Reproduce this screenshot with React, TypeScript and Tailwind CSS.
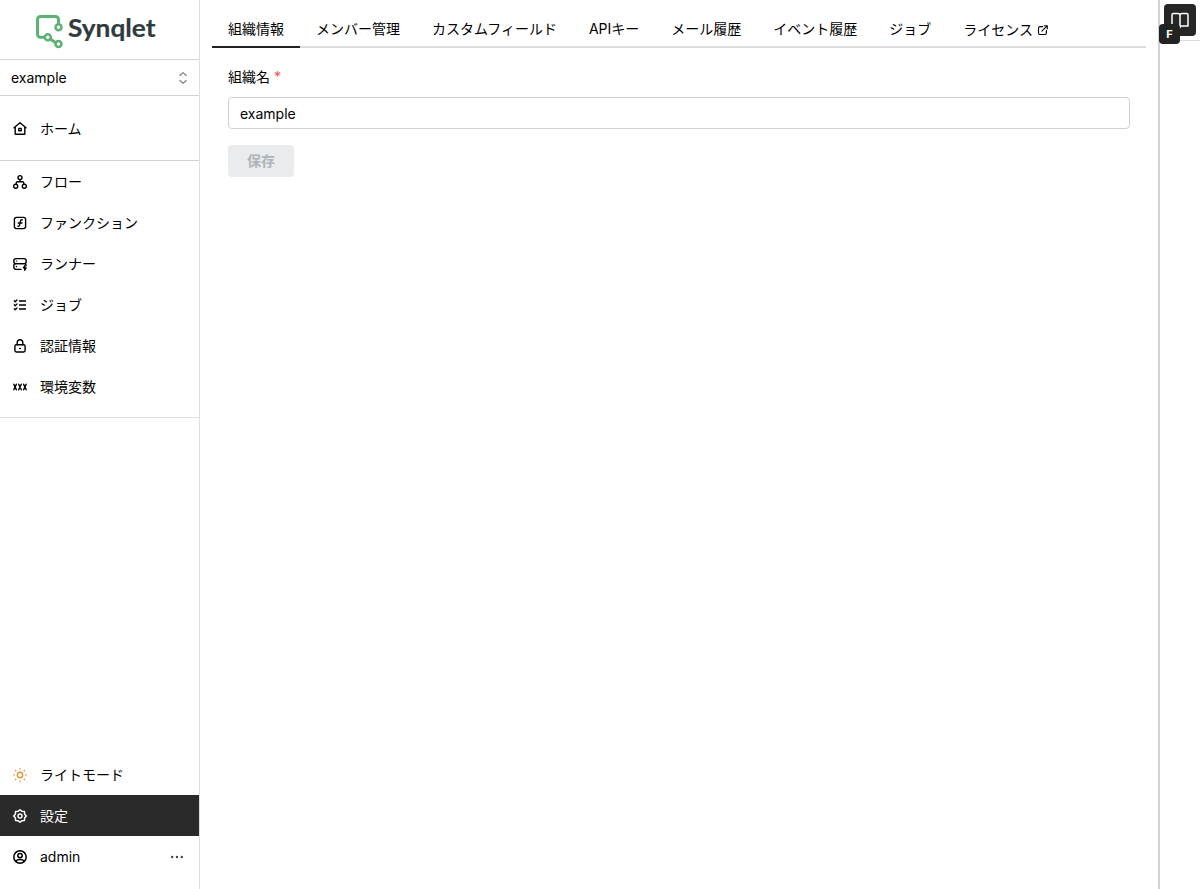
import type { ReactNode } from 'react'

type IconProps = { children: ReactNode; className?: string; strokeWidth?: number }

function Icon({ children, className = '', strokeWidth = 1.4 }: IconProps) {
  return (
    <svg
      viewBox="0 0 16 16"
      className={`size-4 shrink-0 ${className}`}
      fill="none"
      stroke="currentColor"
      strokeWidth={strokeWidth}
      strokeLinecap="round"
      strokeLinejoin="round"
    >
      {children}
    </svg>
  )
}

const HomeIcon = () => (
  <Icon>
    <path d="M2 6.8 8 1.8l6 5M3.2 6v7.2h9.6V6" />
    <rect x="6.8" y="7.4" width="2.4" height="2.4" />
  </Icon>
)

const FlowIcon = () => (
  <Icon>
    <circle cx="8" cy="3.6" r="2" />
    <circle cx="3.7" cy="12.2" r="2" />
    <circle cx="12.3" cy="12.2" r="2" />
    <path d="M8 5.8v2M4.2 10V9.2Q4.2 7.8 5.6 7.8h4.8q1.4 0 1.4 1.4v.8" />
  </Icon>
)

const FunctionIcon = () => (
  <Icon>
    <rect x="2.4" y="2.4" width="11.2" height="11.2" rx="2" />
    <path d="M6 11.2c.9.2 1.3-.2 1.5-1L8.6 5.7c.2-.8.7-1.1 1.6-.9M6.2 8h3.8" />
  </Icon>
)

const RunnerIcon = () => (
  <Icon>
    <rect x="1.8" y="2.6" width="12.4" height="5" rx="2.2" />
    <path d="M9 13.4H4a2.2 2.2 0 0 1-2.2-2.2V9.8A2.2 2.2 0 0 1 4 7.6h8a2.2 2.2 0 0 1 2.2 2M4.4 5.1h.1M4.4 10.5h.1" />
    <path d="m12.9 9.6-1.5 2.3h2.7l-1.4 2.3z" fill="currentColor" />
  </Icon>
)

const JobIcon = () => (
  <Icon>
    <path d="M7 4h7M7 8h7M7 12h7" strokeLinecap="butt" strokeWidth="1.3" />
    <path d="m2.3 3.8.9.9L5 3M2.3 7.8l.9.9L5 7M2.3 11.8l.9.9L5 11" strokeWidth="1.3" />
  </Icon>
)

const LockIcon = () => (
  <Icon>
    <rect x="2.9" y="6.8" width="10.2" height="7.2" rx="1.4" />
    <path d="M5.2 6.8V4.6a2.8 2.8 0 0 1 5.6 0v2.2" />
    <circle cx="8" cy="10.4" r=".5" fill="currentColor" strokeWidth="1" />
  </Icon>
)

const VariableIcon = () => (
  <Icon>
    <path d="m1.8 5.2 2.6 5.6m0-5.6-2.6 5.6M6.7 5.2l2.6 5.6m0-5.6-2.6 5.6M11.6 5.2l2.6 5.6m0-5.6-2.6 5.6" />
  </Icon>
)

const SunIcon = () => (
  <Icon className="text-[#e3942a]">
    <circle cx="8" cy="8" r="2.7" />
    <path d="M8 1.8v.3M8 13.9v.3M1.8 8h.3M13.9 8h.3M3.6 3.6l.2.2M12.2 12.2l.2.2M3.6 12.4l.2-.2M12.2 3.8l.2-.2" />
  </Icon>
)

const GearIcon = () => (
  <Icon strokeWidth={1.5}>
    <path d="m8 1.7 1.8 1.6 2.6.3.3 2.6L14.3 8l-1.6 1.8-.3 2.6-2.6.3L8 14.3l-1.8-1.6-2.6-.3-.3-2.6L1.7 8l1.6-1.8.3-2.6 2.6-.3z" />
    <circle cx="8" cy="8" r="2" />
  </Icon>
)

const UserIcon = () => (
  <Icon strokeWidth={1.5}>
    <circle cx="8" cy="8" r="6.2" />
    <circle cx="8" cy="6.6" r="2.2" />
    <path d="M3.8 12.1C4.7 10.9 6.2 10.4 8 10.4s3.3.5 4.2 1.7" />
  </Icon>
)

function Logo() {
  return (
    <svg viewBox="0 0 124 38" className="h-[38px] w-[124px]" role="img" aria-label="Synqlet">
      <g fill="none" stroke="#5bb272" strokeWidth="3" strokeLinejoin="round">
        <path d="M24.5 11.5v-4a3 3 0 0 0-3-3H6.5a3 3 0 0 0-3 3v14.7a3 3 0 0 0 3 3h4M15.8 26.8l5.6 3.8" />
        <circle cx="24.5" cy="15.2" r="3" strokeWidth="2.5" />
        <circle cx="13.8" cy="25.2" r="3" strokeWidth="2.5" />
        <circle cx="24.5" cy="32" r="3" strokeWidth="2.5" />
      </g>
      <text
        x="34"
        y="24.7"
        textLength="87.5"
        lengthAdjust="spacingAndGlyphs"
        className="fill-[#303b3d] stroke-[#303b3d] font-['Lato'] text-[25px] font-bold"
        strokeWidth="0.2"
      >
        Synqlet
      </text>
    </svg>
  )
}

type NavItemProps = { icon: ReactNode; label: string; active?: boolean; trailing?: ReactNode }

function NavItem({ icon, label, active, trailing }: NavItemProps) {
  return (
    <a
      className={`flex h-[41px] items-center gap-3 px-3 ${active ? 'bg-[#2a2a2a] text-white' : 'text-black'}`}
    >
      {icon}
      <span className="flex-1">{label}</span>
      {trailing}
    </a>
  )
}

const mainNav = [
  { label: 'フロー', icon: <FlowIcon /> },
  { label: 'ファンクション', icon: <FunctionIcon /> },
  { label: 'ランナー', icon: <RunnerIcon /> },
  { label: 'ジョブ', icon: <JobIcon /> },
  { label: '認証情報', icon: <LockIcon /> },
  { label: '環境変数', icon: <VariableIcon /> },
]

const tabs = ['組織情報', 'メンバー管理', 'カスタムフィールド', 'APIキー', 'メール履歴', 'イベント履歴', 'ジョブ']

function Sidebar() {
  return (
    <aside className="flex w-[200px] shrink-0 flex-col border-r border-[#dcdfe0]">
      <div className="flex h-[60px] border-b border-[#d0d4d6] pt-3 pl-[34px]">
        <Logo />
      </div>

      {/* Organization switcher */}
      <div className="flex h-9 items-center justify-between border-b border-[#d0d4d6] pr-2 pl-[11px]">
        <span>example</span>
        <Icon strokeWidth={1.1} className="text-[#777]">
          <path d="m4.8 5.5 3.2-2.8 3.2 2.8M4.8 10.5l3.2 2.8 3.2-2.8" />
        </Icon>
      </div>

      <nav className="border-b border-[#d0d4d6] pt-3 pb-[11px]">
        <NavItem icon={<HomeIcon />} label="ホーム" />
      </nav>

      <nav className="border-b border-[#dcdfe0] pb-[10px]">
        {mainNav.map((item) => (
          <NavItem key={item.label} {...item} />
        ))}
      </nav>

      <nav className="mt-auto pb-3">
        <NavItem icon={<SunIcon />} label="ライトモード" />
        <NavItem icon={<GearIcon />} label="設定" active />
        <NavItem
          icon={<UserIcon />}
          label="admin"
          trailing={
            <svg viewBox="0 0 16 16" className="mr-[2px] size-4" fill="#444">
              <circle cx="3.2" cy="8" r="1.2" />
              <circle cx="8" cy="8" r="1.2" />
              <circle cx="12.8" cy="8" r="1.2" />
            </svg>
          }
        />
      </nav>
    </aside>
  )
}

function TabBar() {
  return (
    <div className="flex h-12 border-b-2 border-[#dadddd]">
      {tabs.map((tab, i) => (
        <button
          key={tab}
          className={`-mb-[2px] border-b-2 px-4 pt-[11px] ${i === 0 ? 'border-[#222]' : 'border-transparent'}`}
        >
          {tab}
        </button>
      ))}
      <button className="flex items-center gap-1 px-4 pt-[13px]">
        ライセンス
        <Icon strokeWidth={1.5} className="size-[12px]!">
          <path d="M7.5 3.5H4a2 2 0 0 0-2 2V12a2 2 0 0 0 2 2h6.5a2 2 0 0 0 2-2V8.5M6.5 9.5l7-7M9.8 2.3h3.9v3.9" />
        </Icon>
      </button>
    </div>
  )
}

export default function App() {
  return (
    <div className="flex h-screen overflow-hidden bg-white font-['Inter','Noto_Sans_CJK_JP',sans-serif] text-sm leading-5 text-black">
      <Sidebar />

      <main className="min-w-0 flex-1 px-3">
        <TabBar />
        <form className="px-4 pt-[18px]">
          <label className="block h-[22px] leading-[22px]">
            組織名 <span className="text-[#f05252]">*</span>
          </label>
          <input
            defaultValue="example"
            className="mt-[9px] block h-8 w-full rounded border border-[#ced1d3] px-[11px] outline-none"
          />
          <button
            type="button"
            disabled
            className="mt-4 h-8 w-[66px] rounded bg-[#e9ebed] font-bold text-[#adb5b9]"
          >
            保存
          </button>
        </form>
      </main>

      {/* Collapsed docs panel */}
      <aside className="w-[42px] shrink-0 border-l-2 border-[#d0d3d5]">
        <div className="relative h-[41px] border-b border-[#d9dcde] pt-1 pl-1">
          <button className="flex size-8 items-center justify-center rounded bg-[#262626] text-white">
            <svg
              viewBox="0 0 20 20"
              className="size-5"
              fill="none"
              stroke="currentColor"
              strokeWidth="1.5"
              strokeLinecap="round"
              strokeLinejoin="round"
            >
              <path d="M10 5.5a2 2 0 0 0-2-2H3.5A1.500 1.500 0 0 0 2 5v11h6a2 2 0 0 1 2 1.500A2 2 0 0 1 12 16h6V5a1.500 1.500 0 0 0-1.500-1.500H12a2 2 0 0 0-2 2zM10 5.500v12" />
            </svg>
          </button>
          <span className="absolute top-6 -left-px flex h-5 w-[21px] items-center justify-center rounded bg-[#232323] text-[11px] font-bold text-white">
            F
          </span>
        </div>
      </aside>
    </div>
  )
}
